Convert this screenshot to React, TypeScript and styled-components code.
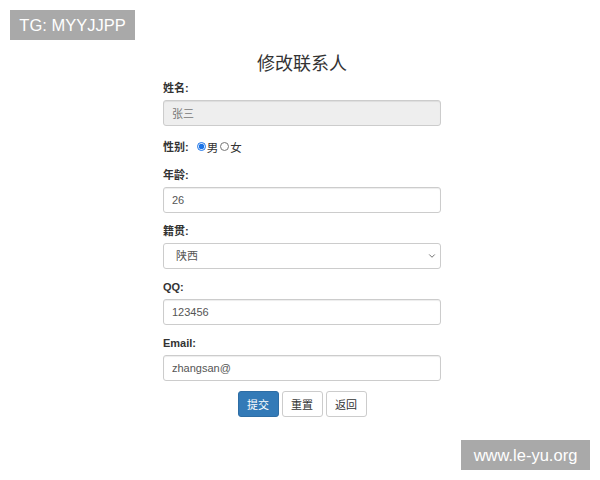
import styled, { createGlobalStyle } from "styled-components";
import { useState } from "react";
import { ChevronDown } from "lucide-react";

const GlobalStyle = createGlobalStyle`
  html, body {
    margin: 0;
    padding: 0;
    background: #fff;
  }
  body {
    font-family: "Liberation Sans", "Noto Sans CJK SC", sans-serif;
    font-size: 11px;
    color: #333;
  }
  * {
    box-sizing: border-box;
  }
`;

const App = () => {
  const [gender, setGender] = useState("男");
  const [city, setCity] = useState("陕西");

  return (
    <>
      <GlobalStyle />
      <Page>
        <FormBox>
          <Title>修改联系人</Title>

          <Group>
            <Label>姓名:</Label>
            <Input value="张三" disabled readOnly />
          </Group>

          <Group>
            <GenderRow>
              <Label inline>性别:</Label>
              <RadioItem>
                <Radio
                  type="radio"
                  name="gender"
                  checked={gender === "男"}
                  onChange={() => setGender("男")}
                />
                男
              </RadioItem>
              <RadioItem>
                <Radio
                  type="radio"
                  name="gender"
                  checked={gender === "女"}
                  onChange={() => setGender("女")}
                />
                女
              </RadioItem>
            </GenderRow>
          </Group>

          <Group>
            <Label>年龄:</Label>
            <Input defaultValue="26" />
          </Group>

          <Group>
            <Label>籍贯:</Label>
            <SelectWrapper>
              <Select value={city} onChange={(e) => setCity(e.target.value)}>
                <option>陕西</option>
                <option>北京</option>
                <option>上海</option>
              </Select>
              <ChevronDown size={10} strokeWidth={2} className="select-icon" />
            </SelectWrapper>
          </Group>

          <Group>
            <Label>QQ:</Label>
            <Input defaultValue="123456" />
          </Group>

          <Group>
            <Label>Email:</Label>
            <Input defaultValue="zhangsan@" />
          </Group>

          <ButtonRow>
            <Button primary>提交</Button>
            <Button>重置</Button>
            <Button>返回</Button>
          </ButtonRow>
        </FormBox>
      </Page>
      <Badge corner="top">TG: MYYJJPP</Badge>
      <Badge corner="bottom">www.le-yu.org</Badge>
    </>
  );
};

export default App;

const Page = styled.div`
  width: 600px;
  height: 480px;
  padding: 52px 0 0 4px;
`;

const FormBox = styled.form`
  width: 278px;
  margin: 0 auto;
`;

const Title = styled.h3`
  margin: 0 0 4px;
  font-size: 18px;
  line-height: 24px;
  font-weight: normal;
  text-align: center;
  color: #333;
`;

const Group = styled.div`
  margin-bottom: 10px;
`;

const Label = styled.label<{ inline?: boolean }>`
  display: ${(props) => (props.inline ? "inline-block" : "block")};
  margin-bottom: ${(props) => (props.inline ? "0" : "4px")};
  margin-right: ${(props) => (props.inline ? "8px" : "0")};
  font-size: 11px;
  line-height: 16px;
  font-weight: bold;
  color: #333;
`;

const Input = styled.input`
  display: block;
  width: 100%;
  height: 26px;
  padding: 0 8px;
  font-family: inherit;
  font-size: 11px;
  color: #555;
  background: #fff;
  border: 1px solid #ccc;
  border-radius: 3px;
  box-shadow: inset 0 1px 1px rgba(0, 0, 0, 0.075);
  outline: none;

  &:disabled {
    background: #eee;
    color: #777;
  }
`;

const GenderRow = styled.div`
  display: flex;
  align-items: center;
  height: 21px;
`;

const RadioItem = styled.label`
  display: inline-flex;
  align-items: center;
  font-size: 11.5px;
  color: #333;
  margin-right: 2px;
`;

const Radio = styled.input`
  width: 9px;
  height: 9px;
  margin: 0 1px 0 0;
  accent-color: #1a73e8;
`;

const SelectWrapper = styled.div`
  position: relative;

  .select-icon {
    position: absolute;
    right: 4px;
    top: 8px;
    color: #555;
    pointer-events: none;
  }
`;

const Select = styled.select`
  display: block;
  width: 100%;
  height: 26px;
  padding: 0 12px;
  font-family: inherit;
  font-size: 11px;
  color: #555;
  background: #fff;
  border: 1px solid #ccc;
  border-radius: 3px;
  appearance: none;
  outline: none;
`;

const ButtonRow = styled.div`
  display: flex;
  justify-content: center;
  gap: 3px;
`;

const Button = styled.button<{ primary?: boolean }>`
  width: 41px;
  height: 26px;
  padding: 0;
  font-family: inherit;
  font-size: 11px;
  color: ${(props) => (props.primary ? "#fff" : "#333")};
  background: ${(props) => (props.primary ? "#337ab7" : "#fff")};
  border: 1px solid ${(props) => (props.primary ? "#2e6da4" : "#ccc")};
  border-radius: 3px;
  cursor: pointer;
`;

const Badge = styled.div<{ corner: "top" | "bottom" }>`
  position: absolute;
  ${(props) =>
    props.corner === "top"
      ? "top: 10px; left: 10px; width: 125px;"
      : "bottom: 10px; right: 10px; width: 129px;"}
  height: 30px;
  display: flex;
  align-items: center;
  justify-content: center;
  background: #a9a9a9;
  color: #fff;
  font-family: "Liberation Sans", sans-serif;
  font-size: 16.5px;
`;
